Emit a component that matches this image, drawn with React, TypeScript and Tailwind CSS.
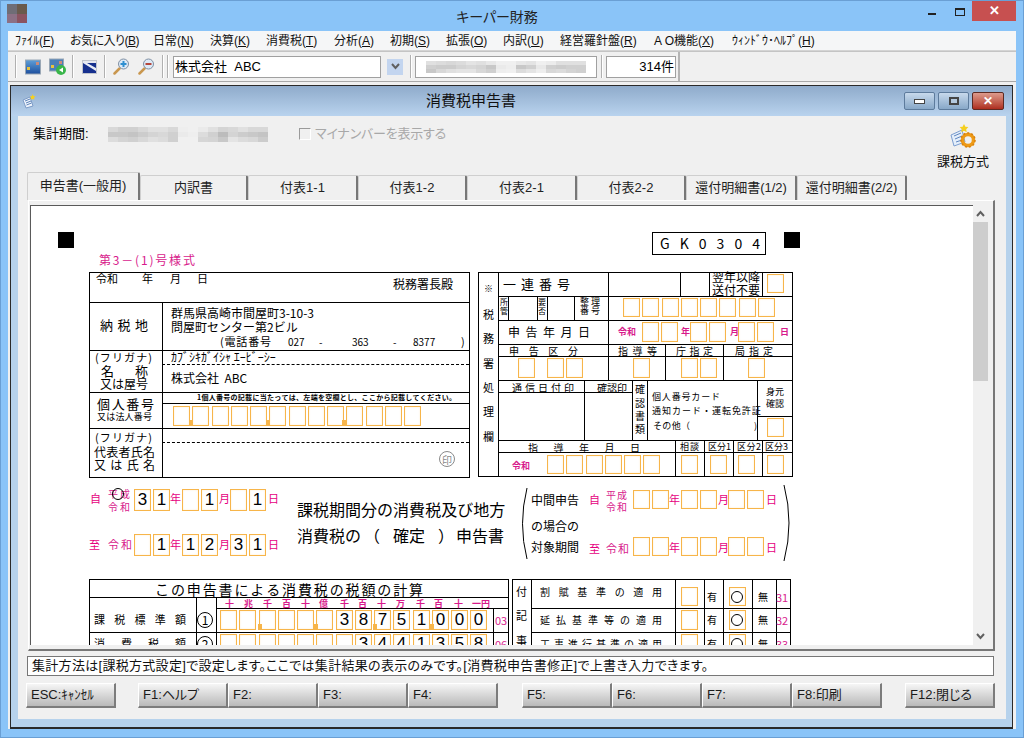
import type { ReactNode } from 'react';

const OX = 31;
const OY = 206;

const PINK = 'text-[#d81b8c]';
const HOT = 'text-[#e6007e]';

// menu label, access key, width taken in the bar
const menus: [string, string, number][] = [
  ['ﾌｧｲﾙ', 'F', 40],
  ['お気に入り', 'B', 68],
  ['日常', 'N', 42],
  ['決算', 'K', 41],
  ['消費税', 'T', 53],
  ['分析', 'A', 41],
  ['初期', 'S', 41],
  ['拡張', 'O', 42],
  ['内訳', 'U', 42],
  ['経営羅針盤', 'R', 79],
  ['A O機能', 'X', 63],
  ['ｳｨﾝﾄﾞｳ･ﾍﾙﾌﾟ', 'H', 84],
];

const tabs: [string, number][] = [
  ['内訳書', 108],
  ['付表1-1', 110],
  ['付表1-2', 109],
  ['付表2-1', 110],
  ['付表2-2', 109],
  ['還付明細書(1/2)', 111],
  ['還付明細書(2/2)', 110],
];

// horizontal rules of the paper form: x1, x2, y
const hLines: [number, number, number][] = [
  [89, 469, 272], [89, 469, 302], [89, 469, 350], [89, 469, 392], [162, 469, 403], [89, 469, 428], [89, 469, 477],
  [478, 792, 272], [498, 792, 296], [498, 792, 320], [498, 792, 344], [498, 792, 356], [498, 792, 380],
  [498, 632, 392], [757, 792, 416], [498, 792, 440], [498, 792, 452], [478, 792, 476],
  [652, 765, 232], [652, 765, 254],
  [89, 508, 579], [89, 508, 597], [216, 508, 608], [89, 508, 632],
  [512, 790, 579], [531, 790, 608], [531, 790, 632],
];

// vertical rules: x, y1, y2
const vLines: [number, number, number][] = [
  [89, 272, 477], [469, 272, 477], [162, 302, 477],
  [478, 272, 476], [498, 272, 476], [792, 272, 476], [608, 272, 380], [680, 272, 296], [709, 272, 296], [762, 272, 296],
  [508, 296, 320], [537, 296, 320], [547, 296, 320], [574, 296, 320],
  [665, 344, 380], [723, 344, 380], [584, 380, 440], [632, 380, 440], [647, 380, 440], [757, 380, 440],
  [675, 440, 476], [704, 440, 476], [733, 440, 476], [762, 440, 476],
  [652, 232, 254], [765, 232, 254],
  [89, 579, 660], [508, 579, 660], [196, 597, 660], [216, 597, 660], [493, 608, 660],
  [512, 579, 660], [531, 579, 660], [675, 579, 660], [704, 579, 660], [723, 579, 660], [752, 579, 660], [776, 579, 660], [790, 579, 660],
];

// small orange cells of the form: x, y, height
const grid = (start: number, count: number, y: number, h = 20): [number, number, number][] =>
  Array.from({ length: count }, (_, i) => [Math.round(start + i * 19.25), y, h]);

const cells: [number, number, number][] = [
  ...grid(173, 13, 406),
  [767, 274, 19],
  ...grid(623, 8, 298, 19),
  [642, 322, 20], [661, 322, 20], [690, 322, 20], [709, 322, 20], [738, 322, 20], [757, 322, 20],
  [518, 358, 20], [547, 358, 20], [566, 358, 20], [633, 358, 20], [681, 358, 20], [700, 358, 20], [748, 358, 20],
  [767, 418, 19],
  ...grid(547, 6, 455, 19),
  [681, 455, 19], [710, 455, 19], [738, 455, 19], [767, 455, 19],
  [633, 490, 19], [652, 490, 19], [681, 490, 19], [700, 490, 19], [728, 490, 19], [747, 490, 19],
  [633, 537, 19], [652, 537, 19], [681, 537, 19], [700, 537, 19], [728, 537, 19], [747, 537, 19],
  [681, 587, 19], [681, 610, 20], [681, 634, 20],
  [729, 587, 19], [729, 610, 20], [729, 634, 20],
];

// cells holding a digit: x, y, height, digit
const digitCells: [number, number, number, string][] = [
  [134, 489, 22, '3'], [153, 489, 22, '1'], [182, 489, 22, ''], [201, 489, 22, '1'], [230, 489, 22, ''], [249, 489, 22, '1'],
  [134, 534, 22, ''], [153, 534, 22, '1'], [182, 534, 22, '1'], [201, 534, 22, '2'], [230, 534, 22, '3'], [249, 534, 22, '1'],
  ...['', '', '', '', '', '', '3', '8', '7', '5', '1', '0', '0', '0'].map(
    (d, i): [number, number, number, string] => [Math.round(220 + i * 19.25), 610, 20, d],
  ),
  ...['', '', '', '', '', '', '', '3', '4', '4', '1', '3', '5', '8'].map(
    (d, i): [number, number, number, string] => [Math.round(220 + i * 19.25), 634, 20, d],
  ),
];

const ticks: [number, number][] = [
  [189, 420], [266, 420], [342, 420],
  [258, 624], [314, 624], [373, 624], [430, 624],
];

// text on the form: x1, x2 (0 = natural width), y centre, text, classes
const formText: [number, number, number, string, string][] = [
  [99, 195, 260, '第3－(1)号様式', `text-[12px] ${PINK}`],
  [96, 117, 278, '令和', 'text-[11px]'],
  [142, 0, 278, '年', 'text-[11px]'],
  [170, 0, 278, '月', 'text-[11px]'],
  [197, 0, 278, '日', 'text-[11px]'],
  [393, 0, 284, '税務署長殿', 'text-[12px]'],
  [100, 148, 325, '納税地', 'text-[13px]'],
  [171, 0, 313, '群馬県高崎市間屋町3-10-3', 'text-[12px]'],
  [171, 0, 327, '問屋町センター第2ビル', 'text-[12px]'],
  [220, 271, 341, '(電話番号', 'text-[11px]'],
  [288, 0, 341, '027', 'text-[10px]'],
  [319, 0, 341, '-', 'text-[10px]'],
  [352, 0, 341, '363', 'text-[10px]'],
  [393, 0, 341, '-', 'text-[10px]'],
  [413, 0, 341, '8377', 'text-[10px]'],
  [461, 0, 341, ')', 'text-[11px]'],
  [95, 152, 357, '(フリガナ)', 'text-[11px]'],
  [101, 148, 371, '名称', 'text-[13px]'],
  [100, 148, 384, '又は屋号', 'text-[12px]'],
  [171, 0, 357, 'ｶﾌﾞｼｷｶﾞｲｼｬ ｴｰﾋﾞｰｼｰ', 'text-[12px]'],
  [171, 0, 378, '株式会社  ABC', 'text-[12px] whitespace-pre'],
  [97, 154, 404, '個人番号', 'text-[13px]'],
  [97, 152, 417, '又は法人番号', 'text-[9px]'],
  [197, 456, 397, '1個人番号の記載に当たっては、左端を空欄とし、ここから記載してください。', 'text-[7px] font-bold'],
  [95, 152, 437, '(フリガナ)', 'text-[11px]'],
  [94, 155, 452, '代表者氏名', 'text-[12px]'],
  [94, 155, 465, '又は氏名', 'text-[12px]'],

  [660, 760, 243, 'GK0304', 'text-[14px]'],
  [484, 0, 289, '※', 'text-[9px]'],
  [483, 0, 314, '税', 'text-[11px]'],
  [483, 0, 338, '務', 'text-[11px]'],
  [483, 0, 363, '署', 'text-[11px]'],
  [483, 0, 387, '処', 'text-[11px]'],
  [483, 0, 411, '理', 'text-[11px]'],
  [483, 0, 436, '欄', 'text-[11px]'],
  [503, 570, 284, '一連番号', 'text-[13px]'],
  [712, 758, 277, '翌年以降', 'text-[12px]'],
  [712, 758, 290, '送付不要', 'text-[12px]'],
  [500, 0, 302, '所', 'text-[8px]'],
  [500, 0, 311, '管', 'text-[8px]'],
  [538, 0, 302, '要', 'text-[8px]'],
  [538, 0, 311, '否', 'text-[8px]'],
  [580, 600, 302, '整理', 'text-[9px]'],
  [580, 600, 311, '番号', 'text-[9px]'],
  [508, 590, 332, '申告年月日', 'text-[12px]'],
  [618, 636, 332, '令和', `text-[9px] font-bold ${PINK}`],
  [681, 0, 332, '年', `text-[9px] font-bold ${PINK}`],
  [730, 0, 332, '月', `text-[9px] font-bold ${PINK}`],
  [780, 0, 332, '日', `text-[9px] font-bold ${PINK}`],
  [509, 578, 350, '申告区分', 'text-[10px]'],
  [618, 657, 350, '指導等', 'text-[10px]'],
  [676, 713, 350, '庁指定', 'text-[10px]'],
  [735, 773, 350, '局指定', 'text-[10px]'],
  [512, 574, 387, '通信日付印', 'text-[10px]'],
  [597, 626, 387, '確認印', 'text-[10px]'],
  [635, 0, 388, '確', 'text-[10px]'],
  [635, 0, 402, '認', 'text-[10px]'],
  [635, 0, 415, '書', 'text-[10px]'],
  [635, 0, 428, '類', 'text-[10px]'],
  [652, 720, 397, '個人番号カード', 'text-[9px]'],
  [652, 761, 411, '通知カード・運転免許証', 'text-[9px]'],
  [653, 690, 426, 'その他（', 'text-[9px]'],
  [754, 0, 426, ')', 'text-[9px]'],
  [766, 784, 392, '身元', 'text-[9px]'],
  [766, 784, 404, '確認', 'text-[9px]'],
  [528, 640, 447, '指導年月日', 'text-[10px]'],
  [680, 699, 447, '相談', 'text-[9px]'],
  [708, 731, 447, '区分1', 'text-[9px]'],
  [737, 761, 447, '区分2', 'text-[9px]'],
  [765, 787, 447, '区分3', 'text-[9px]'],
  [512, 530, 466, '令和', `text-[9px] font-bold ${PINK}`],

  [90, 0, 498, '自', `text-[11px] ${HOT}`],
  [108, 130, 493, '平成', `text-[10px] ${PINK}`],
  [108, 130, 506, '令和', `text-[10px] ${PINK}`],
  [170, 0, 498, '年', `text-[11px] ${HOT}`],
  [219, 0, 498, '月', `text-[11px] ${HOT}`],
  [268, 0, 498, '日', `text-[11px] ${HOT}`],
  [89, 0, 544, '至', `text-[11px] ${HOT}`],
  [108, 132, 544, '令和', `text-[11px] ${PINK}`],
  [170, 0, 544, '年', `text-[11px] ${HOT}`],
  [219, 0, 544, '月', `text-[11px] ${HOT}`],
  [268, 0, 544, '日', `text-[11px] ${HOT}`],
  [297, 505, 509, '課税期間分の消費税及び地方', 'text-[16px]'],
  [297, 361, 535, '消費税の', 'text-[16px]'],
  [364, 0, 535, '（', 'text-[16px]'],
  [393, 425, 535, '確定', 'text-[16px]'],
  [438, 0, 535, '）', 'text-[16px]'],
  [456, 504, 535, '申告書', 'text-[16px]'],

  [531, 578, 500, '中間申告', 'text-[12px]'],
  [531, 578, 526, 'の場合の', 'text-[12px]'],
  [531, 578, 547, '対象期間', 'text-[12px]'],
  [589, 0, 499, '自', `text-[11px] ${HOT}`],
  [606, 627, 494, '平成', `text-[10px] ${PINK}`],
  [606, 627, 506, '令和', `text-[10px] ${PINK}`],
  [669, 0, 499, '年', `text-[11px] ${HOT}`],
  [718, 0, 499, '月', `text-[11px] ${HOT}`],
  [766, 0, 499, '日', `text-[11px] ${HOT}`],
  [589, 0, 548, '至', `text-[11px] ${HOT}`],
  [606, 629, 548, '令和', `text-[11px] ${PINK}`],
  [669, 0, 547, '年', `text-[11px] ${HOT}`],
  [718, 0, 547, '月', `text-[11px] ${HOT}`],
  [766, 0, 547, '日', `text-[11px] ${HOT}`],

  [155, 423, 589, 'この申告書による消費税の税額の計算', 'text-[14px]'],
  [94, 186, 619, '課税標準額', 'text-[11px]'],
  [94, 186, 643, '消費税額', 'text-[11px]'],
  [495, 0, 620, '03', `text-[11px] ${PINK}`],
  [495, 0, 644, '06', `text-[11px] ${PINK}`],
  [225, 0, 604, '十', `text-[9px] font-bold ${PINK}`],
  [244, 0, 604, '兆', `text-[9px] font-bold ${PINK}`],
  [263, 0, 604, '千', `text-[9px] font-bold ${PINK}`],
  [282, 0, 604, '百', `text-[9px] font-bold ${PINK}`],
  [301, 0, 604, '十', `text-[9px] font-bold ${PINK}`],
  [319, 0, 604, '億', `text-[9px] font-bold ${PINK}`],
  [340, 0, 604, '千', `text-[9px] font-bold ${PINK}`],
  [358, 0, 604, '百', `text-[9px] font-bold ${PINK}`],
  [377, 0, 604, '十', `text-[9px] font-bold ${PINK}`],
  [396, 0, 604, '万', `text-[9px] font-bold ${PINK}`],
  [416, 0, 604, '千', `text-[9px] font-bold ${PINK}`],
  [434, 0, 604, '百', `text-[9px] font-bold ${PINK}`],
  [454, 0, 604, '十', `text-[9px] font-bold ${PINK}`],
  [472, 490, 604, '一円', `text-[9px] font-bold ${PINK}`],

  [516, 0, 591, '付', 'text-[11px]'],
  [516, 0, 615, '記', 'text-[11px]'],
  [516, 0, 640, '事', 'text-[11px]'],
  [540, 662, 591, '割賦基準の適用', 'text-[10px]'],
  [540, 662, 619, '延払基準等の適用', 'text-[10px]'],
  [540, 662, 643, '工事進行基準の適用', 'text-[10px]'],
  [707, 0, 596, '有', 'text-[10px]'],
  [707, 0, 619, '有', 'text-[10px]'],
  [707, 0, 643, '有', 'text-[10px]'],
  [758, 0, 596, '無', 'text-[10px]'],
  [758, 0, 619, '無', 'text-[10px]'],
  [758, 0, 643, '無', 'text-[10px]'],
  [776, 0, 597, '31', `text-[11px] ${PINK}`],
  [776, 0, 620, '32', `text-[11px] ${PINK}`],
  [776, 0, 644, '33', `text-[11px] ${PINK}`],
];

function FormText({ x1, x2, y, text, cls }: { x1: number; x2: number; y: number; text: string; cls: string }) {
  const spread = x2 > 0;
  return (
    <div
      className={`absolute flex h-0 items-center whitespace-nowrap ${spread ? 'justify-between' : ''} ${cls}`}
      style={{ left: x1 - OX, top: y - OY, width: spread ? x2 - x1 : undefined }}
    >
      {spread ? [...text].map((c, i) => <span key={i}>{c}</span>) : text}
    </div>
  );
}

function Cell({ x, y, h, children }: { x: number; y: number; h: number; children?: ReactNode }) {
  return (
    <div
      className="absolute flex w-[17px] items-center justify-center border border-[#f7b54a] font-['Liberation_Sans',sans-serif] text-[17px] shadow-[inset_0_0_2px_#fdeccb]"
      style={{ left: x - OX, top: y - OY, height: h }}
    >
      {children}
    </div>
  );
}

function Ring({ x, y, d, children, cls }: { x: number; y: number; d: number; children?: ReactNode; cls: string }) {
  return (
    <div
      className={`absolute flex items-center justify-center rounded-full border ${cls}`}
      style={{ left: x - OX - d / 2, top: y - OY - d / 2, width: d, height: d }}
    >
      {children}
    </div>
  );
}

function TaxForm() {
  return (
    <div className="relative min-w-0 flex-1 overflow-hidden border-t border-l border-[#5a5a5a] bg-white font-['Noto_Sans_CJK_JP','Liberation_Sans',sans-serif] [font-feature-settings:normal] text-black">
      <div className="absolute h-4 w-4 bg-black" style={{ left: 58 - OX, top: 232 - OY }} />
      <div className="absolute h-4 w-4 bg-black" style={{ left: 784 - OX, top: 232 - OY }} />

      {hLines.map(([a, b, y]) => (
        <div key={`h${a}-${y}`} className="absolute h-px bg-black" style={{ left: a - OX, top: y - OY, width: b - a + 1 }} />
      ))}
      {vLines.map(([x, a, b]) => (
        <div key={`v${x}-${a}`} className="absolute w-px bg-black" style={{ left: x - OX, top: a - OY, height: b - a }} />
      ))}
      <div className="absolute h-0 border-t border-dashed border-black" style={{ left: 162 - OX, top: 364 - OY, width: 307 }} />
      <div className="absolute h-0 border-t border-dashed border-black" style={{ left: 162 - OX, top: 442 - OY, width: 307 }} />

      {cells.map(([x, y, h]) => (
        <Cell key={`c${x}-${y}`} x={x} y={y} h={h} />
      ))}
      {digitCells.map(([x, y, h, d]) => (
        <Cell key={`d${x}-${y}`} x={x} y={y} h={h}>
          {d}
        </Cell>
      ))}
      {ticks.map(([x, y]) => (
        <div key={`t${x}`} className="absolute h-[6px] w-1 bg-[#f7b54a]" style={{ left: x - OX, top: y - OY }} />
      ))}

      {formText.map(([x1, x2, y, text, cls]) => (
        <FormText key={`${x1}-${y}-${text}`} x1={x1} x2={x2} y={y} text={text} cls={cls} />
      ))}

      <Ring x={447} y={459} d={16} cls="border-[#8a8a8a] text-[10px] text-[#8a8a8a]">印</Ring>
      <Ring x={118} y={494} d={12} cls="border-black" />
      <Ring x={205} y={620} d={16} cls="border-black text-[12px]">1</Ring>
      <Ring x={205} y={644} d={16} cls="border-black text-[12px]">2</Ring>
      <Ring x={737} y={597} d={12} cls="border-black" />
      <Ring x={737} y={620} d={12} cls="border-black" />
      <Ring x={737} y={644} d={12} cls="border-black" />

      <svg className="absolute" style={{ left: 515 - OX, top: 484 - OY }} width="280" height="80" fill="none" stroke="black" strokeWidth="1">
        <path d="M12 4 Q3 40 12 75" />
        <path d="M269 1 Q279 39 269 77" />
      </svg>
    </div>
  );
}

function Mosaic({ rows, cellH }: { rows: string[][]; cellH: string }) {
  return (
    <div className="flex flex-col">
      {rows.map((row, r) => (
        <div key={r} className="flex">
          {row.map((c, i) => (
            <div key={i} className={`w-[10px] ${cellH}`} style={{ backgroundColor: `#${c}${c}${c}` }} />
          ))}
        </div>
      ))}
    </div>
  );
}

const mosaicA = [
  'd8 d0 d0 d8 e0 e0 d8 ee f0 ea e0 d4 d8 e0 d8 d8'.split(' '),
  'c8 c8 c4 cc d4 d8 d0 ea ee dc d0 bc d4 cc c8 c4'.split(' '),
  'dc d4 d0 d8 e0 dc d0 f0 f0 d6 d4 c8 e4 dc d8 cc'.split(' '),
];
const mosaicB = [
  'e0 dc d8 dc e4 e0 e8 f0 f0 e8 e4 f0 ec e0 e0 e0'.split(' '),
  'd0 cc cc d4 d8 d4 c8 ea ee c8 d0 e8 d0 cc d0 d0'.split(' '),
  'c8 d8 e0 e4 e4 d8 d0 ee f0 dc e4 ee d8 dc d4 d0'.split(' '),
];

function PictureIcon() {
  return (
    <svg width="16" height="16" viewBox="0 0 16 16">
      <defs>
        <linearGradient id="pic" x1="0" y1="0" x2="0" y2="1">
          <stop offset="0" stopColor="#5f9fd8" />
          <stop offset="1" stopColor="#1d4f9e" />
        </linearGradient>
      </defs>
      <rect x="0.5" y="1" width="15" height="14" fill="url(#pic)" stroke="#9aa7b5" />
      <rect x="2" y="8" width="3" height="3" fill="#e8c33c" />
      <rect x="11" y="3" width="3" height="3" fill="#c98a7a" />
    </svg>
  );
}

function PictureBackIcon() {
  return (
    <svg width="17" height="17" viewBox="0 0 17 17">
      <rect x="0.5" y="1" width="14" height="12" fill="#4a7fb8" stroke="#9aa7b5" />
      <rect x="2" y="7" width="3" height="3" fill="#e8c33c" />
      <rect x="10" y="3" width="3" height="3" fill="#c98a7a" />
      <circle cx="12" cy="12" r="5" fill="#39b54a" />
      <path d="M14 9.500v5l-4-2.500z" fill="white" />
    </svg>
  );
}

function ChartIcon() {
  return (
    <svg width="15" height="14" viewBox="0 0 15 14">
      <rect x="0.5" y="0.5" width="14" height="13" fill="#e6e8f0" stroke="#c0c4cc" />
      <rect x="1" y="3" width="13" height="10" fill="#16308e" />
      <path d="M1 3l13 8v-3l-9-5z" fill="#e8ecf6" />
    </svg>
  );
}

function Magnifier({ minus }: { minus?: boolean }) {
  return (
    <svg width="17" height="17" viewBox="0 0 17 17">
      <path d="M1.500 15.500l5-5" stroke="#c9974f" strokeWidth="2.500" strokeLinecap="round" />
      <circle cx="10.500" cy="6" r="5" fill="#dce9f6" stroke="#7f8fa3" />
      <rect x="7.500" y="5" width="6" height="2" fill={minus ? '#b5473c' : '#2f8fd0'} />
      {!minus && <rect x="9.500" y="3" width="2" height="6" fill="#2f8fd0" />}
    </svg>
  );
}

function SheetIcon() {
  return (
    <svg width="14" height="15" viewBox="0 0 14 15">
      <path d="M1 6l7-3 3 9-7 2z" fill="#eef4fc" stroke="#7d9cc8" />
      <path d="M3 7l5-2M4 9l5-2M4.500 11l5-2" stroke="#5c82b8" />
      <path d="M10.500 0l1 2 2 .3-1.500 1.400.4 2.100-1.900-1-1.900 1 .4-2.100L8 2.300l2-.3z" fill="#f5d020" />
    </svg>
  );
}

function TaxMethodIcon() {
  return (
    <svg width="26" height="26" viewBox="0 0 26 26">
      <path d="M1 11l11-5 3 12-11 4z" fill="#e4eefa" stroke="#7c9ed0" />
      <path d="M4 12l7-3M5 15l7-3M6 18l6-2" stroke="#5f86c0" />
      <path d="M14 0l1.400 2.700 3 .4-2.200 2.100.5 3-2.700-1.400-2.700 1.400.5-3-2.200-2.100 3-.4z" fill="#f5cf1f" />
      <circle cx="18" cy="16" r="5.500" fill="none" stroke="#ee9a16" strokeWidth="3.500" />
      <circle cx="18" cy="16" r="7" fill="none" stroke="#d9820c" strokeWidth="1.500" strokeDasharray="2 2" />
    </svg>
  );
}

function Chevron({ up }: { up?: boolean }) {
  return (
    <svg width="9" height="7" viewBox="0 0 9 7">
      <path d={up ? 'M1 6l3.500-4L8 6' : 'M1 1l3.500 4L8 1'} fill="none" stroke="#606060" strokeWidth="2" />
    </svg>
  );
}

function Separator({ cls }: { cls: string }) {
  return <div className={`h-[23px] w-[2px] border-l border-[#b0b0b0] bg-white ${cls}`} />;
}

function FnButton({ label, cls = '' }: { label: string; cls?: string }) {
  return (
    <button className={`flex h-[25px] w-[90px] items-center border-t border-r-2 border-b-2 border-l border-t-white border-r-[#7c7c7c] border-b-[#7c7c7c] border-l-white bg-gradient-to-b from-[#f6f6f6] to-[#b9b9b9] pl-[4px] text-[13px] text-[#1a1a1a] ${cls}`}>
      {label}
    </button>
  );
}

export default function App() {
  return (
    <div className="flex h-[738px] w-[1024px] flex-col overflow-hidden border border-[#6a9fd4] bg-[#8ac4f8] font-['Liberation_Sans','Noto_Sans_CJK_JP',sans-serif] [font-feature-settings:'palt'] text-black">
      <div className="relative flex h-[30px] shrink-0 items-start pl-[6px]">
        <div className="mt-[3px] grid h-[19px] w-[20px] grid-cols-2">
          <div className="bg-[#6f6d76]" />
          <div className="bg-[#6a5a4c]" />
          <div className="bg-[#8c7085]" />
          <div className="bg-[#8b5360]" />
        </div>
        <div className="absolute top-[6px] right-[30px] left-0 text-center text-[14px] text-[#222]">キーパー財務</div>
        <div className="ml-auto flex items-start">
          <div className="mt-[12px] mr-[19px] h-[2px] w-[8px] bg-[#222]" />
          <div className="mt-[7px] mr-[7px] h-[8px] w-[10px] border border-t-2 border-[#222]" />
          <div className="mr-[7px] flex h-[20px] w-[44px] items-center justify-center bg-[#c75050] text-[13px] font-bold text-white">✕</div>
        </div>
      </div>

      <div className="mx-[7px] flex h-[20px] shrink-0 items-center gap-[15px] border-b border-[#d4d4d4] bg-[#f5f6f7] pl-[7px] text-[12px] text-[#111]">
        {menus.map(([name, key, w]) => (
          <span key={key} className={`whitespace-nowrap ${key === 'B' ? 'tracking-[-0.5px]' : ''}`} style={{ width: w }}>
            {name}(<u>{key}</u>)
          </span>
        ))}
      </div>

      <div className="mx-[7px] flex h-[31px] shrink-0 items-center border-y border-t-[#c4c4c4] border-b-[#a8a8a8] bg-[#f0f0f0]">
        <div className="flex h-full w-[672px] items-center border-r-2 border-[#b4b4b4]">
          <Separator cls="ml-[7px]" />
          <div className="ml-[8px] flex w-[16px]"><PictureIcon /></div>
          <div className="ml-[8px] flex w-[17px]"><PictureBackIcon /></div>
          <Separator cls="ml-[6px]" />
          <div className="ml-[8px] flex w-[15px]"><ChartIcon /></div>
          <Separator cls="ml-[7px]" />
          <div className="ml-[7px] flex w-[17px]"><Magnifier /></div>
          <div className="ml-[8px] flex w-[17px]"><Magnifier minus /></div>
          <Separator cls="ml-[7px]" />
          <Separator cls="ml-[3px]" />
          <div className="ml-[4px] flex h-[22px] w-[208px] items-center border border-[#a0a0a0] bg-white pl-[1px] text-[13px] whitespace-pre [font-feature-settings:normal]">株式会社  ABC</div>
          <div className="ml-[6px] flex h-[16px] w-[16px] items-center justify-center bg-[#c3d5ef]"><Chevron /></div>
          <Separator cls="ml-[7px]" />
          <div className="ml-[3px] flex h-[22px] w-[182px] items-center border border-[#a0a0a0] bg-white pl-[10px]">
            <Mosaic rows={mosaicB} cellH="h-1" />
          </div>
          <Separator cls="ml-[4px]" />
          <div className="ml-[3px] flex h-[22px] w-[70px] items-center justify-end border border-[#a0a0a0] bg-white pr-[1px] text-[13px]">314件</div>
        </div>
      </div>

      <div className="mx-[7px] mb-[8px] min-h-0 flex-1 bg-[#f0f0f0] pt-[3px] pr-[3px] pl-[2px]">
        <div className="flex h-full flex-col border border-b-2 border-[#2a2a2a] bg-[#b6d2ec]">
          <div className="flex h-[30px] shrink-0 items-center bg-gradient-to-b from-[#8fabcb] to-[#b9d3ee]">
            <div className="ml-[11px] flex w-[14px]"><SheetIcon /></div>
            <div className="ml-[390px] text-[15px] [font-feature-settings:normal] text-[#111]">消費税申告書</div>
            <div className="mr-[8px] ml-auto flex gap-[3px]">
              <div className="flex h-[18px] w-[31px] items-center justify-center rounded-[2px] border border-[#5d7b9c] bg-gradient-to-b from-[#c7d9ec] to-[#88a8c8]">
                <div className="h-[5px] w-[11px] border border-[#444] bg-white" />
              </div>
              <div className="flex h-[18px] w-[31px] items-center justify-center rounded-[2px] border border-[#5d7b9c] bg-gradient-to-b from-[#c7d9ec] to-[#88a8c8]">
                <div className="h-[8px] w-[10px] border-2 border-[#444] bg-[#b4c9de]" />
              </div>
              <div className="flex h-[18px] w-[32px] items-center justify-center rounded-[2px] border border-[#5d2a22] bg-gradient-to-b from-[#dc9a8c] to-[#ad2c1e] text-[12px] font-bold text-white">✕</div>
            </div>
          </div>

          <div className="mr-[6px] mb-[8px] ml-[7px] flex min-h-0 flex-1 flex-col bg-[#f0f0f0]">
            <div className="flex h-[56px] shrink-0 items-start">
              <div className="flex h-[36px] items-center pl-[15px]">
                <span className="w-[75px] text-[13px] [font-feature-settings:normal]">集計期間:</span>
                <Mosaic rows={mosaicA} cellH="h-[5px]" />
                <div className="ml-[31px] h-3 w-3 border border-t-[#9a9a9a] border-r-white border-b-white border-l-[#9a9a9a] bg-[#f0f0f0]" />
                <span className="ml-[4px] text-[13px] tracking-[-0.2px] text-[#a8a8a8]">マイナンバーを表示する</span>
              </div>
              <div className="mr-[17px] ml-auto flex flex-col items-center pt-[8px]">
                <TaxMethodIcon />
                <span className="mt-[2px] text-[13px] [font-feature-settings:normal] text-[#111]">課税方式</span>
              </div>
            </div>

            <div className="flex h-[28px] shrink-0 items-end pl-[9px] text-[13px] [font-feature-settings:normal] text-[#222]">
              <div className="flex h-[28px] w-[113px] items-center justify-center rounded-t-[2px] border-t border-r-2 border-l border-[#cfcfcf] border-r-[#777] pb-[2px]">申告書(一般用)</div>
              {tabs.map(([label, w]) => (
                <div
                  key={label}
                  className="flex h-[25px] items-center justify-center rounded-t-[2px] border-t border-r-2 border-l border-[#cfcfcf] border-r-[#777]"
                  style={{ width: w }}
                >
                  {label}
                </div>
              ))}
            </div>

            <div className="ml-[10px] flex h-[451px] w-[967px] shrink-0 border-t border-r-2 border-b-2 border-l border-t-white border-r-[#777] border-b-[#777] border-l-white pt-[4px] pr-[5px] pb-[4px] pl-[1px]">
              <TaxForm />
              <div className="flex w-[15px] shrink-0 flex-col items-center bg-[#f0f0f0]">
                <div className="flex h-[17px] items-center"><Chevron up /></div>
                <div className="h-[159px] w-full bg-[#cdcdcd]" />
                <div className="mt-auto flex h-[17px] items-center"><Chevron /></div>
              </div>
            </div>

            <div className="mt-[5px] ml-[9px] flex h-[20px] w-[967px] shrink-0 items-center border border-[#777] bg-white pl-[4px] text-[13px] tracking-[0.3px] whitespace-nowrap text-[#111]">
              集計方法は[課税方式設定]で設定します。ここでは集計結果の表示のみです。[消費税申告書修正]で上書き入力できます。
            </div>

            <div className="mt-[7px] ml-[8px] flex shrink-0">
              <FnButton label="ESC:ｷｬﾝｾﾙ" cls="[font-feature-settings:normal]" />
              <FnButton label="F1:ヘルプ" cls="ml-[22px]" />
              <FnButton label="F2:" />
              <FnButton label="F3:" />
              <FnButton label="F4:" />
              <FnButton label="F5:" cls="ml-[24px]" />
              <FnButton label="F6:" />
              <FnButton label="F7:" />
              <FnButton label="F8:印刷" />
              <FnButton label="F12:閉じる" cls="ml-[23px]" />
            </div>
          </div>
        </div>
      </div>
    </div>
  );
}
